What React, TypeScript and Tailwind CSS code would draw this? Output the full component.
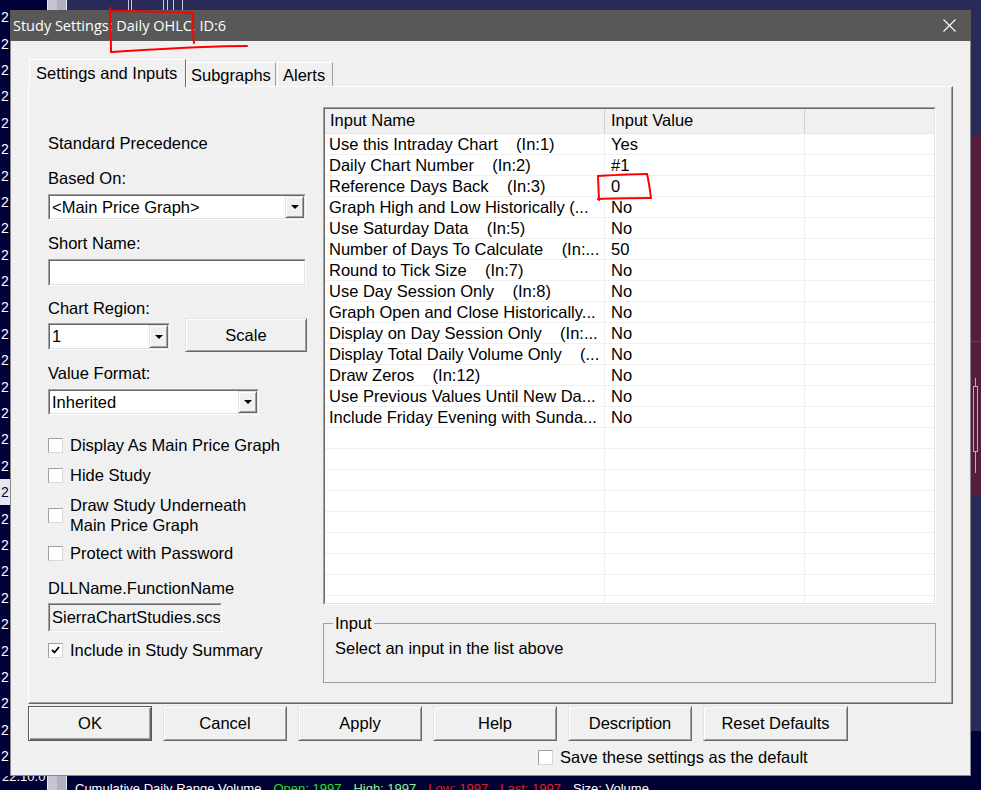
import React from "react";

const SANS = "font-['Liberation_Sans',Arial,sans-serif]";
const RAISED =
  "border border-t-[#e3e3e3] border-l-[#e3e3e3] border-r-[#696969] border-b-[#696969] shadow-[inset_1px_1px_0_#ffffff,inset_-1px_-1px_0_#a0a0a0] bg-[#f0f0f0]";

const inputs: [string, string][] = [
  ["Use this Intraday Chart    (In:1)", "Yes"],
  ["Daily Chart Number    (In:2)", "#1"],
  ["Reference Days Back    (In:3)", "0"],
  ["Graph High and Low Historically (...", "No"],
  ["Use Saturday Data    (In:5)", "No"],
  ["Number of Days To Calculate    (In:...", "50"],
  ["Round to Tick Size    (In:7)", "No"],
  ["Use Day Session Only    (In:8)", "No"],
  ["Graph Open and Close Historically...", "No"],
  ["Display on Day Session Only    (In:...", "No"],
  ["Display Total Daily Volume Only    (...", "No"],
  ["Draw Zeros    (In:12)", "No"],
  ["Use Previous Values Until New Da...", "No"],
  ["Include Friday Evening with Sunda...", "No"],
];

function Sunken({ className, inner, children }: { className: string; inner?: string; children?: React.ReactNode }) {
  return (
    <div className={`border border-t-[#a0a0a0] border-l-[#a0a0a0] border-r-white border-b-white ${className}`}>
      <div className={`h-full border border-t-[#696969] border-l-[#696969] border-r-[#e3e3e3] border-b-[#e3e3e3] ${inner ?? "bg-white"}`}>
        {children}
      </div>
    </div>
  );
}

function Combo({ className, text }: { className: string; text: string }) {
  return (
    <Sunken className={className}>
      <div className="h-full flex">
        <span className="flex-1 pl-[2px] leading-[22px] whitespace-nowrap overflow-hidden">{text}</span>
        <div className={`${RAISED} w-[19px] h-full flex items-center justify-center`}>
          <svg width="8" height="4" viewBox="0 0 8 4">
            <polygon points="0,0 8,0 4,4" fill="#000" />
          </svg>
        </div>
      </div>
    </Sunken>
  );
}

function Check({ checked, children, className }: { checked?: boolean; children: React.ReactNode; className?: string }) {
  return (
    <div className={`flex items-center gap-[7px] ${className ?? ""}`}>
      <div className="w-[15px] h-[15px] shrink-0 bg-white border border-t-[#a0a0a0] border-l-[#a0a0a0] border-r-[#d8d8d8] border-b-[#d8d8d8] flex items-center justify-center">
        {checked && (
          <svg width="9" height="8" viewBox="0 0 9 8">
            <path d="M1 4 L3.5 6.5 L8 1" stroke="#000" strokeWidth="1.8" fill="none" />
          </svg>
        )}
      </div>
      <div className="leading-[20px]">{children}</div>
    </div>
  );
}

function LeftColumn() {
  return (
    <div className="ml-[19px] w-[275px] flex flex-col">
      <div className="mt-[46px] leading-[20px]">Standard Precedence</div>
      <div className="mt-[15px] leading-[20px]">Based On:</div>
      <Combo className="mt-[6px] w-[258px] h-[26px]" text="<Main Price Graph>" />
      <div className="mt-[13px] leading-[20px]">Short Name:</div>
      <Sunken className="mt-[6px] w-[258px] h-[27px]" />
      <div className="mt-[12px] leading-[20px]">Chart Region:</div>
      <div className="flex items-start gap-[15px]">
        <Combo className="mt-[5px] w-[122px] h-[27px]" text="1" />
        <button className={`${RAISED} w-[122px] h-[34px] text-[16.5px] leading-[30px]`}>Scale</button>
      </div>
      <div className="mt-[11px] leading-[20px]">Value Format:</div>
      <Combo className="mt-[6px] w-[211px] h-[26px]" text="Inherited" />
      <Check className="mt-[20px]">Display As Main Price Graph</Check>
      <Check className="mt-[10px]">Hide Study</Check>
      <Check className="mt-[10px]">
        Draw Study Underneath
        <br />
        Main Price Graph
      </Check>
      <Check className="mt-[8px]">Protect with Password</Check>
      <div className="mt-[15px] leading-[20px]">DLLName.FunctionName</div>
      <Sunken className="mt-[5px] w-[174px] h-[29px]" inner="bg-[#f0f0f0]">
        <div className="pl-[2px] leading-[25px] whitespace-nowrap overflow-hidden">SierraChartStudies.scs</div>
      </Sunken>
      <Check checked className="mt-[8px]">Include in Study Summary</Check>
    </div>
  );
}

function InputList() {
  const empty = Array.from({ length: 9 }, () => ["", ""] as [string, string]);
  const rows = [...inputs, ...empty];
  return (
    <Sunken className="w-[613px] h-[498px]">
      <div className="h-full overflow-hidden flex flex-col">
        <div className="flex h-[25px] shrink-0 bg-[#f0f0f0] border-b border-[#e5e5e5] leading-[22px]">
          <div className="w-[280px] pl-[5px] border-r border-[#d0d0d0]">Input Name</div>
          <div className="w-[200px] pl-[6px] border-r border-[#d0d0d0]">Input Value</div>
          <div className="flex-1" />
        </div>
        {rows.map(([name, value], i) => (
          <div key={i} className="flex h-[21px] shrink-0 border-b border-[#f0f0f0] leading-[20px]">
            <div className="w-[280px] pl-[4px] border-r border-[#f0f0f0] whitespace-pre overflow-hidden">{name}</div>
            <div className="w-[200px] pl-[6px] border-r border-[#f0f0f0] whitespace-pre">{value}</div>
            <div className="flex-1" />
          </div>
        ))}
      </div>
    </Sunken>
  );
}

function Dialog() {
  const buttons = ["Cancel", "Apply", "Help", "Description"];
  return (
    <div className="w-[961px] h-full flex flex-col">
      <div className="h-[31px] shrink-0 bg-[#585858] flex items-center justify-between pl-[3px] pr-[15px]">
        <span className="font-['Open_Sans','Noto_Sans',sans-serif] text-[14.5px] text-white">Study Settings: Daily OHLC. ID:6</span>
        <svg width="13" height="13" viewBox="0 0 13 13">
          <path d="M0.5 0.5 L12.5 12.5 M12.5 0.5 L0.5 12.5" stroke="#fff" strokeWidth="1.1" />
        </svg>
      </div>
      <div className="flex-1 bg-[#f0f0f0] border-x border-b border-[#8a8a8a] pl-[17px] pt-[18px] flex flex-col text-[16.5px] text-black">
        <div className="flex items-end h-[28px] ml-[1px]">
          <div className="relative z-10 h-[28px] w-[157px] bg-[#f0f0f0] border-t border-l border-r border-t-white border-l-white border-r-[#696969] pl-[6px] pt-[3px] leading-[20px]">
            Settings and Inputs
          </div>
          <div className="h-[25px] w-[90px] border-t border-l border-r border-t-white border-l-white border-r-[#a0a0a0] pl-[4px] pt-[2px] leading-[20px]">
            Subgraphs
          </div>
          <div className="h-[25px] w-[56px] ml-px border-t border-l border-r border-t-white border-l-white border-r-[#a0a0a0] pl-[5px] pt-[2px] leading-[20px]">
            Alerts
          </div>
        </div>
        <div className="-mt-px w-[925px] h-[618px] shrink-0 flex border border-t-white border-l-white border-r-[#696969] border-b-[#696969] shadow-[inset_-1px_-1px_0_#a0a0a0]">
          <LeftColumn />
          <div className="mt-[20px] w-[613px] flex flex-col">
            <InputList />
            <fieldset className="mt-[8px] h-[70px] border border-[#a0a0a0]">
              <legend className="ml-[9px] px-[2px] leading-[20px]">Input</legend>
              <div className="mt-[5px] pl-[11px] leading-[20px]">Select an input in the list above</div>
            </fieldset>
          </div>
        </div>
        <div className="mt-[2px] flex gap-[11px]">
          <button className="w-[124px] h-[35px] bg-[#f0f0f0] border border-[#5a5a5a] shadow-[inset_1px_1px_0_#ffffff,inset_-1px_-1px_0_#696969,inset_-2px_-2px_0_#a0a0a0] text-[16.5px]">
            OK
          </button>
          {buttons.map((b) => (
            <button key={b} className={`${RAISED} w-[124px] h-[35px] text-[16.5px]`}>
              {b}
            </button>
          ))}
          <button className={`${RAISED} w-[145px] h-[35px] text-[16.5px]`}>Reset Defaults</button>
        </div>
        <Check className="mt-[6px] ml-[510px]">Save these settings as the default</Check>
      </div>
    </div>
  );
}

function LeftStrip() {
  const items = Array.from({ length: 29 }, (_, i) => i);
  return (
    <div className="w-[10px] h-full overflow-hidden">
      <div className="-mt-[6px] flex flex-col">
        {items.map((i) => (
          <div
            key={i}
            className={`h-[26.4px] shrink-0 flex items-center pl-[1px] text-[14px] leading-[16px] ${
              i === 18 ? "bg-[#e6e6ee] text-[#000040]" : "text-white"
            }`}
          >
            2
          </div>
        ))}
      </div>
    </div>
  );
}

function RightStrip() {
  return (
    <div className="w-[10px] h-full flex flex-col">
      <div className="h-[126px] bg-[#2a2a58]" />
      <div className="h-[360px] bg-[#571d3d]">
        <svg width="10" height="360" viewBox="0 0 10 360">
          <line x1="0" y1="205.5" x2="10" y2="205.5" stroke="#d01030" strokeWidth="1" />
          <line x1="4.5" y1="242" x2="4.5" y2="337" stroke="#d8a0b4" strokeWidth="1" />
          <rect x="2.5" y="250.5" width="4" height="65" fill="#571d3d" stroke="#d8a0b4" strokeWidth="1" />
        </svg>
      </div>
      <div className="h-[235px] bg-[#2a2a58]" />
      <div className="flex-1 bg-[#000038]" />
    </div>
  );
}

function ScrollBlock() {
  return <div className="w-[20px] h-full bg-[#c4c4d2] border-x border-[#e8e8f0] shadow-[inset_-9px_0_0_#b0b0c4]" />;
}

function TopStrip() {
  return (
    <div className="h-[10px] flex shrink-0">
      <div className="w-[47px] bg-[#000038]" />
      <ScrollBlock />
      <div className="flex-1 bg-[#2a2a58]">
        <svg width="914" height="10" viewBox="0 0 914 10">
          {[61, 64, 96, 100, 106, 115].map((x) => (
            <line key={x} x1={x + 0.5} y1="0" x2={x + 0.5} y2="10" stroke="#c8c8d8" strokeWidth="1" />
          ))}
        </svg>
      </div>
    </div>
  );
}

function BottomStrip() {
  return (
    <div className="h-[14px] flex shrink-0 overflow-hidden">
      <div className="w-[47px] bg-[#000038] text-white text-[13px] leading-[14px] overflow-hidden">
        <div className="-mt-[6px] pl-[2px] whitespace-nowrap">22.10.0</div>
      </div>
      <ScrollBlock />
      <div className="flex-1 bg-[#000033] overflow-hidden text-[13px] leading-[16px] whitespace-nowrap pt-[5px] pl-[8px] flex gap-[12px]">
        <span className="text-white">Cumulative Daily Range Volume</span>
        <span className="text-[#20e020]">Open: 1997</span>
        <span className="text-[#90f090]">High: 1997</span>
        <span className="text-[#e02020]">Low: 1997</span>
        <span className="text-[#e02020]">Last: 1997</span>
        <span className="text-white">Size: Volume</span>
      </div>
    </div>
  );
}

function Annotations() {
  return (
    <svg className="absolute inset-0 pointer-events-none" width="981" height="790" viewBox="0 0 981 790">
      <g stroke="#ff0000" strokeWidth="2" fill="none" strokeLinecap="round">
        <path d="M110 8 C110 22 111 38 111 52" />
        <path d="M110 11 C140 11 170 12 193 13" />
        <path d="M193 13 C193 24 193 34 194 43" />
        <path d="M111 52 C160 49 205 46 247 46" />
        <path d="M598 176 L599 200" />
        <path d="M598 176 C615 175 632 174 647 174" />
        <path d="M647 174 C649 182 650 190 651 198" />
        <path d="M598 199 C615 198 635 198 651 198" />
      </g>
    </svg>
  );
}

export default function App() {
  return (
    <div className={`${SANS} relative w-[981px] h-[790px] overflow-hidden bg-[#000038] flex flex-col`}>
      <TopStrip />
      <div className="flex h-[766px] shrink-0">
        <LeftStrip />
        <Dialog />
        <RightStrip />
      </div>
      <BottomStrip />
      <Annotations />
    </div>
  );
}
